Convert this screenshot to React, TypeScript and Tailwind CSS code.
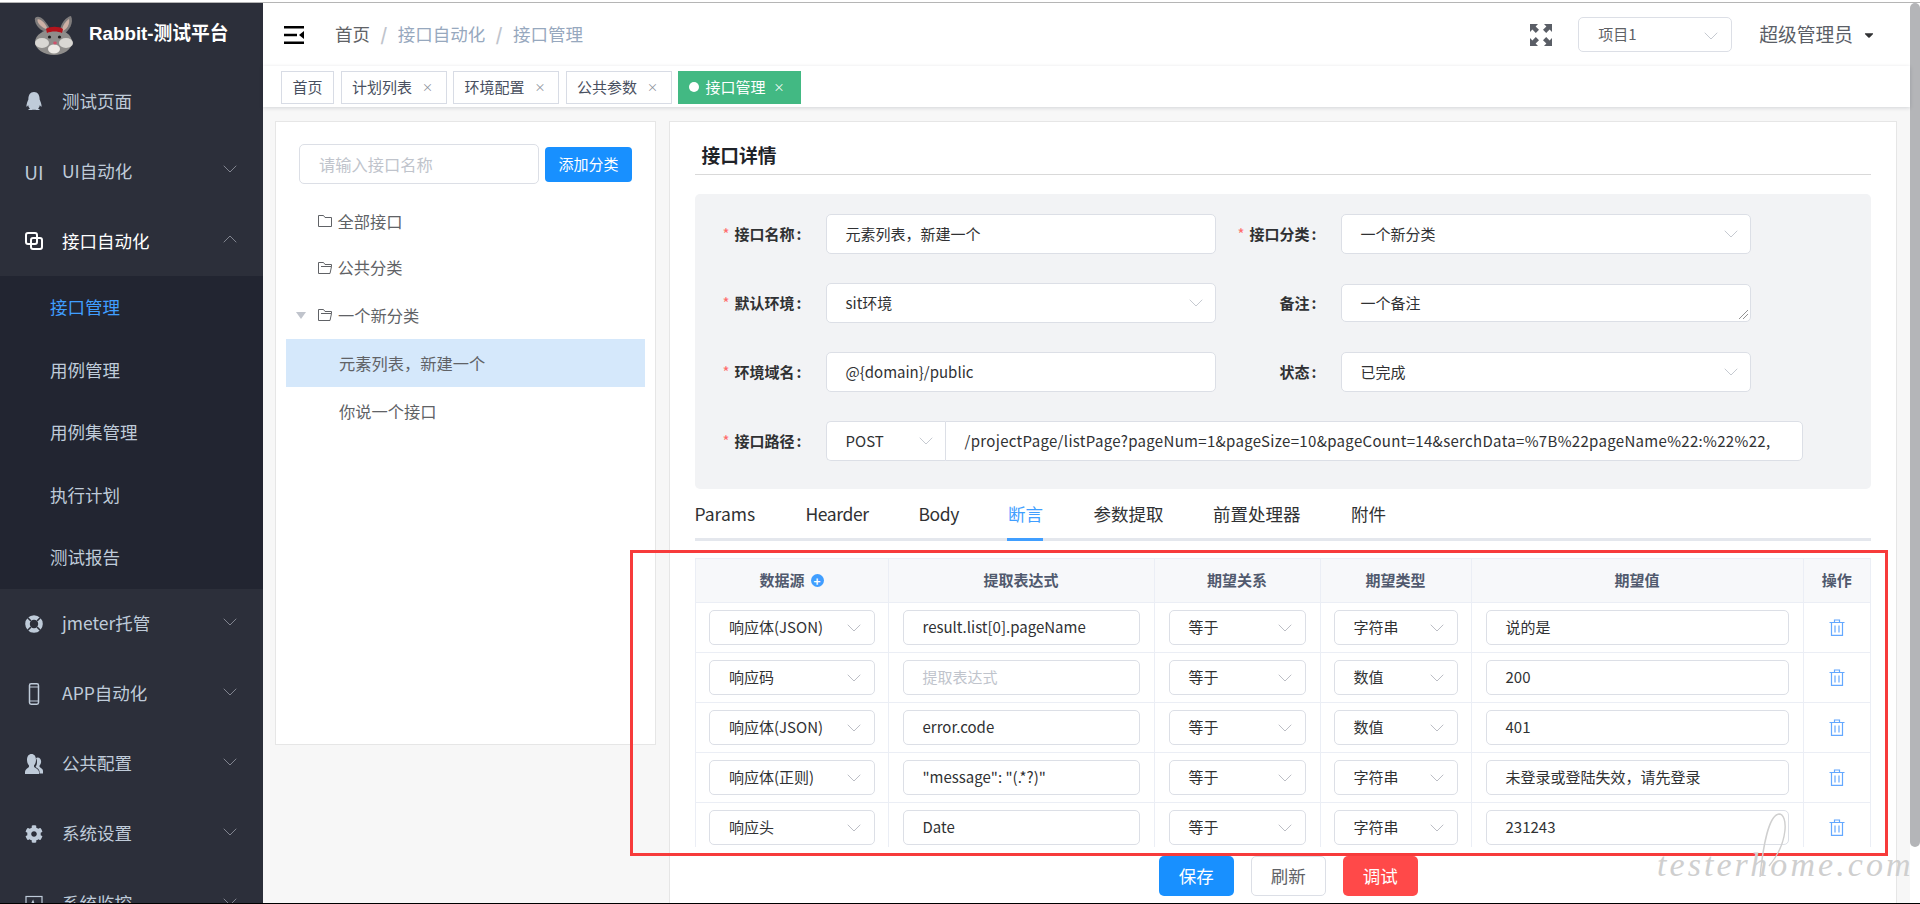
import { ChevronDown, ChevronUp } from 'lucide-react';
import { FaQq, FaCog, FaCaretDown } from 'react-icons/fa';

const cjk = "font-['Noto_Sans_CJK_SC','Noto_Sans',sans-serif]";

function RabbitLogo() {
  return (
    <svg viewBox="0 0 40 40" className="h-[40px] w-[40px] shrink-0">
      <path d="M14 17C6 17 0 9 1 3c4-4 10 2 14 9z" fill="#7f7c7c" />
      <path d="M12 14C7 12 3 8 3.500 4.500c3-1 7 3 9.500 8z" fill="#cdb0a5" />
      <path d="M26 15c1-7 6-13 11-14 3 6-1 15-9 19z" fill="#7f7c7c" />
      <path d="M28 14c1-4 4-8 7-10 1 5-2 10-6 12z" fill="#cdb0a5" />
      <path d="M20 40C10 40 1 34 1 27 1 20 10 14 20 14s18 6 18 13c0 7-8 13-18 13z" fill="#8f8d8b" />
      <ellipse cx="8" cy="28" rx="7" ry="5" fill="#d9d7d3" />
      <ellipse cx="32" cy="28" rx="7" ry="5" fill="#d9d7d3" />
      <ellipse cx="20" cy="34" rx="6" ry="4.500" fill="#ece9e5" />
      <path d="M12 14c4-3 13-3 17 0l-1 4c-4-2-11-2-15 0z" fill="#b3141c" />
      <circle cx="15.500" cy="22" r="1.600" fill="#222" />
      <circle cx="25.500" cy="22" r="1.600" fill="#222" />
      <ellipse cx="21" cy="28" rx="1.800" ry="1.400" fill="#d0506a" />
    </svg>
  );
}

function MenuIcon({ name }: { name: string }) {
  if (name === 'qq') return <FaQq size={18} />;
  if (name === 'ui') return <span className="text-[19px] leading-none">UI</span>;
  if (name === 'api')
    return (
      <svg viewBox="0 0 18 18" className="h-[18px] w-[18px]" fill="none" stroke="#fff" strokeWidth="2">
        <rect x="1" y="1" width="11" height="11" rx="2" />
        <rect x="6" y="6" width="11" height="11" rx="2" />
      </svg>
    );
  if (name === 'ring')
    return (
      <svg viewBox="0 0 18 18" className="h-[18px] w-[18px]" fill="none">
        <circle cx="9" cy="9" r="6.500" stroke="currentColor" strokeWidth="4.600" />
        <path d="M2 2l4 4M16 2l-4 4M2 16l4-4M16 16l-4-4" stroke="#2c2f3a" strokeWidth="1.600" />
      </svg>
    );
  if (name === 'phone')
    return (
      <svg viewBox="0 0 18 22" className="h-[22px] w-[18px]" fill="none" stroke="currentColor">
        <rect x="4.500" y="0.800" width="9" height="20.400" rx="1.600" strokeWidth="1.500" />
        <path d="M5 4h8M5 18h8" strokeWidth="1.200" />
      </svg>
    );
  if (name === 'users')
    return (
      <svg viewBox="0 0 18 20" className="h-[20px] w-[18px]" fill="currentColor">
        <path d="M12.500 3.500c2.500 0 3.800 2 3.600 4.500-.2 1.700-1 3-1.600 3.600v1c0 1 3.500 2 3.500 4.400v2.500h-3.500v-2c0-2.200-2.500-3.600-4-4.600.8-1 1.500-2.500 1.500-5 0-1.500-.3-2.800-1-3.700.5-.4 1-.7 1.500-.7z" />
        <path d="M6.500 0C9.300 0 11 2.300 11 6c0 2.600-1 4.500-2 5.500v1c0 1.200 5 2.500 5 5.500v2H0v-2c0-3 4-4.300 4-5.500v-1C3 10.500 2 8.600 2 6c0-3.700 1.700-6 4.500-6z" />
      </svg>
    );
  if (name === 'cog') return <FaCog size={18} />;
  return (
    <svg viewBox="0 0 18 18" className="h-[18px] w-[18px]" fill="none" stroke="currentColor" strokeWidth="1.200">
      <rect x="1" y="1.500" width="16" height="13" />
      <path d="M2 10h4l2-4 2 6 2-2h4" />
    </svg>
  );
}

const topMenus = [
  { icon: 'ui', label: 'UI自动化' },
];
const subMenus = ['接口管理', '用例管理', '用例集管理', '执行计划', '测试报告'];
const lowMenus = [
  { icon: 'ring', label: 'jmeter托管' },
  { icon: 'phone', label: 'APP自动化' },
  { icon: 'users', label: '公共配置' },
  { icon: 'cog', label: '系统设置' },
  { icon: 'chart', label: '系统监控' },
];

function MenuRow({ icon, label, open, arrow = true }: { icon: string; label: string; open?: boolean; arrow?: boolean }) {
  return (
    <div className={`flex h-[70px] shrink-0 items-center pl-[25px] pr-[21px] text-[17.5px] ${open ? 'text-white' : 'text-[#bfcbd9]'}`}>
      <span className="flex w-[37px] shrink-0 items-center">
        <span className="flex w-[18px] justify-center">
          <MenuIcon name={icon} />
        </span>
      </span>
      <span className="flex-1">{label}</span>
      {arrow &&
        (open ? (
          <ChevronUp size={24} strokeWidth={0.9} className="-mt-1 text-[#8b8f98]" />
        ) : (
          <ChevronDown size={24} strokeWidth={0.9} className="-mt-1 text-[#8b8f98]" />
        ))}
    </div>
  );
}

function Sidebar() {
  return (
    <aside className="flex w-[263px] shrink-0 flex-col overflow-hidden bg-[#2c2f3a]">
      <div className="flex h-[63px] shrink-0 items-center pl-[34px]">
        <RabbitLogo />
        <span className="ml-[15px] font-['Liberation_Sans','Noto_Sans_CJK_SC',sans-serif] text-[18.75px] font-bold text-white">
          Rabbit-测试平台
        </span>
      </div>
      <MenuRow icon="qq" label="测试页面" arrow={false} />
      {topMenus.map((m) => (
        <MenuRow key={m.label} icon={m.icon} label={m.label} />
      ))}
      <MenuRow icon="api" label="接口自动化" open />
      <div className="shrink-0 bg-[#222531]">
        {subMenus.map((s, i) => (
          <div key={s} className={`flex h-[62.5px] items-center pl-[50px] text-[17.5px] ${i === 0 ? 'text-[#409eff]' : 'text-[#bfcbd9]'}`}>
            {s}
          </div>
        ))}
      </div>
      {lowMenus.map((m) => (
        <MenuRow key={m.label} icon={m.icon} label={m.label} />
      ))}
    </aside>
  );
}

function Header() {
  return (
    <header className="flex h-[63px] shrink-0 items-center bg-white">
      <svg viewBox="0 0 20 18" className="ml-[21px] h-[18px] w-[20px]">
        <path d="M0 0h20v2.400H0zM0 7.800h13v2.400H0zM0 15.600h20V18H0z" fill="#000" />
        <path d="M20 5v8l-5-4z" fill="#000" />
      </svg>
      <div className="ml-[31px] flex items-center text-[17.5px]">
        <span className="text-[#606266]">首页</span>
        <span className="mx-[10.5px] font-bold text-[#c0c4cc]">/</span>
        <span className="text-[#97a8be]">接口自动化</span>
        <span className="mx-[10.5px] font-bold text-[#c0c4cc]">/</span>
        <span className="text-[#97a8be]">接口管理</span>
      </div>
      <div className="ml-auto flex items-center">
        <svg viewBox="0 0 22 22" className="h-[22px] w-[22px]" fill="#5a5e66">
          <path d="M0 0h8L5.600 2.400 9 5.800 5.800 9 2.400 5.600 0 8zM22 0v8l-2.400-2.400L16.200 9 13 5.800l3.400-3.400L14 0zM0 22v-8l2.400 2.400L5.800 13 9 16.200l-3.400 3.400L8 22zM22 22h-8l2.400-2.400L13 16.200l3.200-3.200 3.400 3.400L22 14z" />
        </svg>
        <div className="ml-[26px] flex h-[35px] w-[154px] items-center justify-between rounded-[5px] border border-[#dcdfe6] pl-[19px] pr-[8px] text-[15px] text-[#606266]">
          <span>项目1</span>
          <ChevronDown size={24} strokeWidth={0.9} className="mt-[3px] text-[#c0c4cc]" />
        </div>
        <span className="ml-[27px] text-[18.75px] text-[#5a5e66]">超级管理员</span>
        <FaCaretDown size={14} className="ml-[9px] mr-[34px] text-[#303133]" />
      </div>
    </header>
  );
}

const tags = [
  { label: '首页', closable: false },
  { label: '计划列表', closable: true },
  { label: '环境配置', closable: true },
  { label: '公共参数', closable: true },
];

function TagsBar() {
  return (
    <div className="relative z-10 flex h-[41px] shrink-0 items-start gap-[6.5px] bg-white pl-[18px] pt-[5px] shadow-[0_1px_4px_rgba(0,21,41,0.15)]">
      {tags.map((t) => (
        <div key={t.label} className="flex h-[32.5px] items-center border border-[#d8dce5] bg-white px-[10.5px] text-[15px] text-[#495060]">
          {t.label}
          {t.closable && <span className="ml-[8px] w-[15px] text-center text-[11px] leading-none text-[#8a8f99]">×</span>}
        </div>
      ))}
      <div className="flex h-[32.5px] items-center bg-[#42b983] pl-[11px] pr-[14px] text-[15px] text-white">
        <span className="mr-[6.5px] h-[10px] w-[10px] rounded-full bg-white" />
        接口管理
        <span className="ml-[6px] w-[15px] text-center text-[11px] leading-none">×</span>
      </div>
    </div>
  );
}

function Folder({ open }: { open?: boolean }) {
  return (
    <svg viewBox="0 0 14 14" className="h-[14px] w-[14px] shrink-0" fill="none" stroke="#606266" strokeWidth="1">
      {open ? (
        <path d="M.5 12.500V1.500h5l1.500 2h6.500v2H3M.5 12.500h11.500l1.500-7" />
      ) : (
        <path d="M.5 12.500V1.500h5l1.500 2h6.500v9z" />
      )}
    </svg>
  );
}

function TreePanel() {
  return (
    <section className="h-[624px] w-[381px] shrink-0 border border-[#e6e6e6] bg-white">
      <div className="mt-[22px] flex items-center pl-[23px]">
        <div className="flex h-[40px] w-[240px] items-center rounded-[5px] border border-[#dcdfe6] pl-[19px] text-[16.25px] text-[#c0c4cc]">
          请输入接口名称
        </div>
        <button className="ml-[6px] h-[35px] w-[87px] rounded-[4px] bg-[#1890ff] text-[15px] text-white">添加分类</button>
      </div>
      <div className="mt-[14px] text-[16.25px] text-[#606266]">
        <div className="flex h-[46px] items-center gap-[6px] pl-[41.5px]">
          <Folder />
          全部接口
        </div>
        <div className="flex h-[47px] items-center gap-[6px] pl-[41.5px]">
          <Folder open />
          公共分类
        </div>
        <div className="flex h-[48px] items-center pl-[20px]">
          <span className="mr-[12px] h-0 w-0 border-x-[5px] border-t-[7px] border-x-transparent border-t-[#c0c4cc]" />
          <Folder open />
          <span className="ml-[6px]">一个新分类</span>
        </div>
        <div className="mx-[10px] flex h-[48px] items-center bg-[#d5e8fb] pl-[53px]">元素列表，新建一个</div>
        <div className="mx-[10px] flex h-[48px] items-center pl-[53px]">你说一个接口</div>
      </div>
    </section>
  );
}

function Select({ value, className = '' }: { value: string; className?: string }) {
  return (
    <div className={`flex h-[40px] items-center justify-between rounded-[5px] border border-[#dcdfe6] bg-white pl-[19px] pr-[7px] text-[15px] text-[#303133] ${className}`}>
      <span>{value}</span>
      <ChevronDown size={24} strokeWidth={0.9} className="text-[#c0c4cc]" />
    </div>
  );
}

function Input({ value, className = '' }: { value: string; className?: string }) {
  return (
    <div className={`flex h-[40px] items-center overflow-hidden whitespace-nowrap rounded-[5px] border border-[#dcdfe6] bg-white pl-[19px] text-[15px] text-[#303133] ${className}`}>
      {value}
    </div>
  );
}

function Label({ text, required, className = '' }: { text: string; required?: boolean; className?: string }) {
  return (
    <div className={`flex shrink-0 items-center justify-end text-[15px] font-bold text-[#303133] ${className}`}>
      {required && <span className="mr-[5px] font-normal text-[#ff6b6b]">*</span>}
      {text}
      <span className="ml-[2px]">:</span>
    </div>
  );
}

function BasicForm() {
  return (
    <div className="mt-[19px] h-[295px] rounded-[5px] bg-[#f2f3f5] pt-[20px]">
      <div className="flex items-center">
        <Label required text="接口名称" className="w-[107px]" />
        <Input value="元素列表，新建一个" className="ml-[24px] w-[390px]" />
        <Label required text="接口分类" className="w-[101px]" />
        <Select value="一个新分类" className="ml-[24px] w-[410px]" />
      </div>
      <div className="mt-[29px] flex items-center">
        <Label required text="默认环境" className="w-[107px]" />
        <Select value="sit环境" className="ml-[24px] w-[390px]" />
        <Label text="备注" className="w-[101px]" />
        <div className="relative ml-[24px] flex h-[38px] w-[410px] items-center overflow-hidden rounded-[5px] border border-[#dcdfe6] bg-white pl-[19px] text-[15px] text-[#303133]">
          一个备注
          <svg viewBox="0 0 10 10" className="absolute bottom-[2px] right-[2px] h-[10px] w-[10px]" stroke="#777" strokeWidth="0.800">
            <path d="M1 10L10 1M5 10l5-5" />
          </svg>
        </div>
      </div>
      <div className="mt-[29px] flex items-center">
        <Label required text="环境域名" className="w-[107px]" />
        <Input value="@{domain}/public" className="ml-[24px] w-[390px]" />
        <Label text="状态" className="w-[101px]" />
        <Select value="已完成" className="ml-[24px] w-[410px]" />
      </div>
      <div className="mt-[29px] flex items-center">
        <Label required text="接口路径" className="w-[107px]" />
        <Select value="POST" className="ml-[24px] w-[119px] rounded-r-none border-r-0" />
        <Input
          value="/projectPage/listPage?pageNum=1&pageSize=10&pageCount=14&serchData=%7B%22pageName%22:%22%22,"
          className="w-[858px] rounded-l-none tracking-[0.32px]"
        />
      </div>
    </div>
  );
}

const tabs = [
  { label: 'Params', w: 'w-[111px]', extra: '' },
  { label: 'Hearder', w: 'w-[113px]', extra: 'tracking-[-0.4px]' },
  { label: 'Body', w: 'w-[89.5px]', extra: 'tracking-[-0.4px]' },
  { label: '断言', w: 'w-[85.5px]', extra: 'text-[#409eff]' },
  { label: '参数提取', w: 'w-[119.5px]', extra: '' },
  { label: '前置处理器', w: 'w-[138px]', extra: '' },
  { label: '附件', w: 'w-[60px]', extra: '' },
];

function Tabs() {
  return (
    <div className="relative h-[52px] border-b-[3px] border-[#e4e7ed]">
      <div className="flex h-[49px] items-center pt-[2px] text-[17.5px] text-[#303133]">
        {tabs.map((t) => (
          <span key={t.label} className={`${t.w} ${t.extra}`}>
            {t.label}
          </span>
        ))}
      </div>
      <div className="absolute -bottom-[3px] left-[312px] h-[3px] w-[36px] bg-[#409eff]" />
    </div>
  );
}

const rows = [
  ['响应体(JSON)', 'result.list[0].pageName', '等于', '字符串', '说的是'],
  ['响应码', '', '等于', '数值', '200'],
  ['响应体(JSON)', 'error.code', '等于', '数值', '401'],
  ['响应体(正则)', '"message": "(.*?)"', '等于', '字符串', '未登录或登陆失效，请先登录'],
  ['响应头', 'Date', '等于', '字符串', '231243'],
];

const colTemplate = 'grid grid-cols-[193px_266px_166px_151px_332px_1fr]';
const cellBorder = 'border-r border-[#ebeef5] last:border-r-0';

function MiniSelect({ value }: { value: string }) {
  return (
    <div className="flex h-[35px] items-center justify-between rounded-[5px] border border-[#dcdfe6] bg-white pl-[19px] pr-[8px] text-[15px] text-[#303133]">
      <span>{value}</span>
      <ChevronDown size={24} strokeWidth={0.9} className="text-[#b4b7be]" />
    </div>
  );
}

function MiniInput({ value, placeholder }: { value: string; placeholder?: string }) {
  return (
    <div className={`flex h-[35px] items-center rounded-[5px] border border-[#dcdfe6] bg-white pl-[19px] text-[15px] ${value ? 'text-[#303133]' : 'text-[#c0c4cc]'}`}>
      {value || placeholder}
    </div>
  );
}

function TrashIcon() {
  return (
    <svg viewBox="0 0 16 17" className="h-[17px] w-[16px]" fill="none" stroke="#64a8ff" strokeWidth="1.200">
      <path d="M0.500 3.500h15M5.500 3V1h5v2M2.500 3.500V16.400h11V3.500M6 6.500v7M10 6.500v7" />
    </svg>
  );
}

function AssertTable() {
  return (
    <div className="mt-[17px] h-[289px] overflow-hidden border-x border-t border-[#ebeef5] text-[15px]">
      <div className={`${colTemplate} h-[44px] bg-[#f7f8fa] font-bold text-[#515a6e]`}>
        {['数据源', '提取表达式', '期望关系', '期望类型', '期望值', '操作'].map((h, i) => (
          <div key={h} className={`flex items-center justify-center border-b ${cellBorder}`}>
            {h}
            {i === 0 && (
              <span className="ml-[6px] flex h-[13px] w-[13px] items-center justify-center rounded-full bg-[#409eff] text-[12px] font-bold leading-none text-white">
                +
              </span>
            )}
          </div>
        ))}
      </div>
      {rows.map((r, i) => (
        <div key={i} className={`${colTemplate} h-[50px]`}>
          <div className={`border-b py-[7px] pl-[13.5px] pr-[13px] ${cellBorder}`}>
            <MiniSelect value={r[0]} />
          </div>
          <div className={`border-b py-[7px] px-[14px] ${cellBorder}`}>
            <MiniInput value={r[1]} placeholder="提取表达式" />
          </div>
          <div className={`border-b py-[7px] px-[14px] ${cellBorder}`}>
            <MiniSelect value={r[2]} />
          </div>
          <div className={`border-b py-[7px] px-[13px] ${cellBorder}`}>
            <MiniSelect value={r[3]} />
          </div>
          <div className={`border-b py-[7px] px-[14px] ${cellBorder}`}>
            <MiniInput value={r[4]} />
          </div>
          <div className={`flex items-center justify-center border-b ${cellBorder}`}>
            <TrashIcon />
          </div>
        </div>
      ))}
    </div>
  );
}

function DetailPanel() {
  return (
    <section className="flex-1 border border-b-0 border-[#e6e6e6] bg-white px-[25px]">
      <h2 className="flex h-[53px] items-end border-b border-[#d9d9d9] pb-[5px] pl-[7px] text-[18.75px] font-bold text-[#1f2329]">接口详情</h2>
      <BasicForm />
      <Tabs />
      <AssertTable />
      <div className="mt-[9px] flex justify-center gap-[17px] pl-[11px] text-[17.5px]">
        <button className="h-[40px] w-[75px] rounded-[5px] bg-[#1890ff] text-white">保存</button>
        <button className="h-[40px] w-[75px] rounded-[5px] border border-[#dcdfe6] bg-white text-[#606266]">刷新</button>
        <button className="h-[40px] w-[75px] rounded-[5px] bg-[#ff4949] text-white">调试</button>
      </div>
    </section>
  );
}

export default function App() {
  return (
    <div className={`relative flex h-[904px] w-[1920px] flex-col overflow-hidden bg-white ${cjk}`}>
      <div className="h-[3px] shrink-0 border-t border-b border-t-white border-b-[#b5b5b5]" />
      <div className="flex min-h-0 flex-1">
        <Sidebar />
        <main className="flex min-w-0 flex-1 flex-col">
          <Header />
          <TagsBar />
          <div className="flex min-h-0 flex-1 gap-[12.5px] bg-[#f7f7f7] pl-[12px] pr-[13px] pt-[14px]">
            <TreePanel />
            <DetailPanel />
          </div>
        </main>
        <div className="w-[10px] shrink-0 bg-white">
          <div className="h-[844px] w-[10px] rounded-full bg-[#b4b5b8]" />
        </div>
      </div>
      <div className="h-px shrink-0 bg-black" />

      {/* red annotation box drawn over the screenshot */}
      <div className="pointer-events-none absolute left-[630px] top-[550px] h-[306px] w-[1258px] border-[3px] border-[#f73b3b]" />

      {/* testerhome watermark */}
      <div className="pointer-events-none absolute left-[1657px] top-[848px] font-['Liberation_Serif',serif] text-[34px] italic leading-none tracking-[0.09em] text-[#cfcfcf]">
        testerhome.com
      </div>
      <svg viewBox="0 0 40 70" className="pointer-events-none absolute left-[1755px] top-[811px] h-[70px] w-[40px]" fill="none" stroke="#cfcfcf" strokeWidth="1.400">
        <path d="M5 66C8 35 14 4 24 3c9 0 10 28-10 52" />
      </svg>
    </div>
  );
}
